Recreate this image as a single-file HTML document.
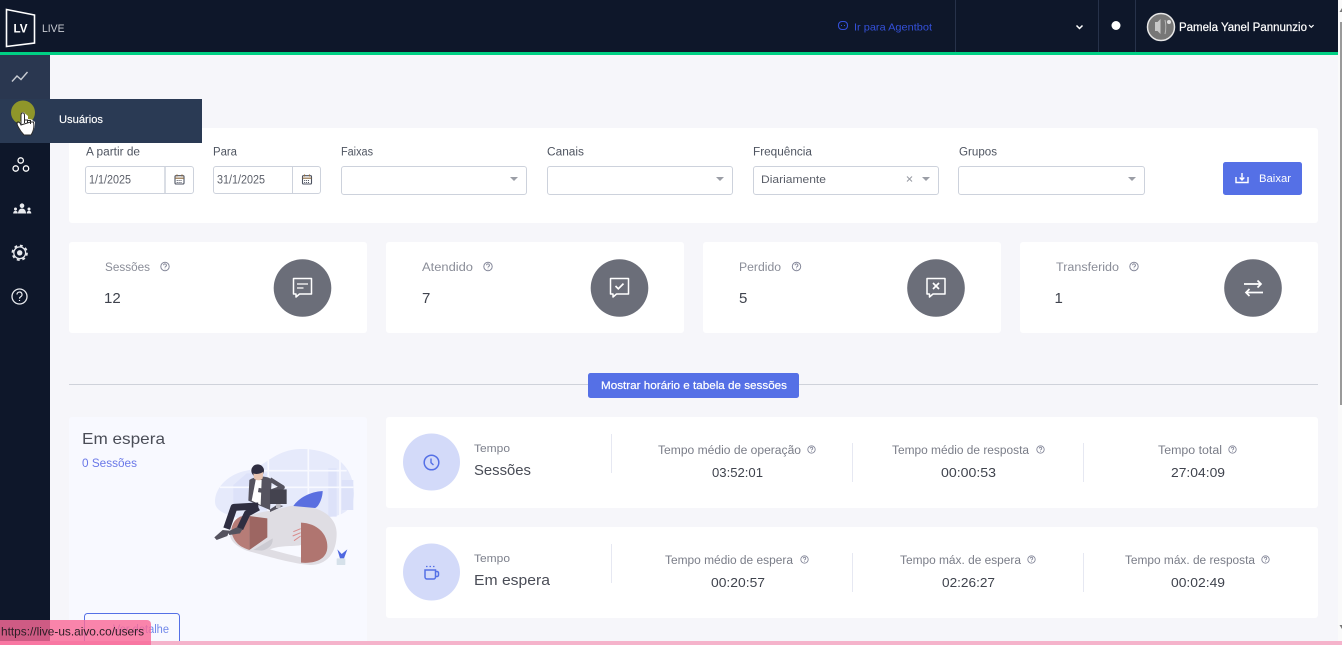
<!DOCTYPE html>
<html lang="pt"><head><meta charset="utf-8"><title>LIVE</title>
<style>
html,body{margin:0;padding:0;width:1342px;height:645px;overflow:hidden;background:#f6f6fa}
svg{display:block}
text{font-family:"Liberation Sans",sans-serif}
.l{font-size:11.5px;fill:#4f5561}
.s{font-size:11.5px;fill:#8a8d98}
.v{font-size:13px;fill:#3f434d}
.n{font-size:15px;fill:#3f434d}
.t{font-size:11px;fill:#7d808c}
.h{font-size:14.5px;fill:#4a4d57}
.m{font-size:11.5px;fill:#7a7d88}
.i{font-size:11.5px;fill:#5a5e68}
</style></head><body>
<svg width="1342" height="645" viewBox="0 0 1342 645" xmlns="http://www.w3.org/2000/svg">
<defs>
<g id="q" fill="none" stroke="#85889a" stroke-width="1"><circle cx="0" cy="0" r="4.2"/><path d="M-1.4-1.2a1.4 1.4 0 1 1 2.1 1.2c-.5.3-.7.6-.7 1.1M0 2.2v.6"/></g>
<g id="qs" fill="none" stroke="#85889a" stroke-width=".9"><circle cx="0" cy="0" r="3.7"/><path d="M-1.2-1a1.2 1.2 0 1 1 1.8 1c-.4.3-.6.5-.6.9M0 1.8v.6"/></g>
<path id="bub" d="M-9-8H9V7.500H-3L-6.500 10.500V7.500H-9Z" fill="none" stroke="#fff" stroke-width="1.500" stroke-linejoin="round"/>
<g id="cal" fill="none" stroke="#4c5260" stroke-width="1.100"><rect x="-4.500" y="-3.800" width="9" height="8.300" rx="1"/><path d="M-4.500-1.300H4.500M-2.500-5V-3M2.500-5V-3" stroke="#8c6a3f"/><path d="M-2.800 1H2.800M-2.800 3H2.800" stroke-dasharray="1 .9"/></g>
</defs>

<rect width="1342" height="645" fill="#f6f6fa"/>

<!-- top bar -->
<rect width="1342" height="52" fill="#0e172a"/>
<rect y="52" width="1342" height="3" fill="#00d084"/>
<path d="M6.500 9.500L34.500 15V43L6.500 46.500Z" fill="none" stroke="#fff" stroke-width="1.600"/>
<text x="13.500" y="32.500" font-size="12" font-weight="700" fill="#fff" textLength="14" lengthAdjust="spacingAndGlyphs">LV</text>
<text x="42" y="32" font-size="11" fill="#c9ccd3" textLength="22.500" lengthAdjust="spacingAndGlyphs">LIVE</text>
<rect x="838.500" y="21.500" width="9" height="8" rx="3.500" fill="none" stroke="#3450d8" stroke-width="1.100"/>
<path d="M841 25.500h1M844 25.500h1" stroke="#3450d8"/>
<text x="854" y="30.500" font-size="10.500" fill="#3450d8" textLength="78" lengthAdjust="spacingAndGlyphs">Ir para Agentbot</text>
<path d="M955.500 0V52M1098.500 0V52M1135.500 0V52" stroke="#27324a"/>
<path d="M1076.500 25.500L1079.500 28.500L1082.500 25.500" fill="none" stroke="#fff" stroke-width="1.500"/>
<circle cx="1116" cy="25.500" r="4.500" fill="#fff"/>
<circle cx="1161" cy="27" r="13.500" fill="#777" stroke="#e6e6e6" stroke-width="1.500"/>
<path d="M1155 22h2.500l3-3v15l-3-3H1155Z" fill="#c8c8c8"/><path d="M1165 20c1 4 1 10 0 14" stroke="#bbb" fill="none"/><circle cx="1169" cy="22" r="2" fill="#ddd"/>
<text x="1179" y="31" font-size="11.500" fill="#fff" stroke="#fff" stroke-width=".2" textLength="128" lengthAdjust="spacingAndGlyphs">Pamela Yanel Pannunzio</text>
<path d="M1309 25l2.300 2.300 2.300-2.300" fill="none" stroke="#fff" stroke-width="1.200"/>

<!-- scrollbar -->
<rect x="1338" y="0" width="4" height="641" fill="#fafafa"/>
<rect x="1340" y="22" width="2" height="383" fill="#9a9a9a"/>
<path d="M1342 8L1339.500 12H1342Z" fill="#777"/>
<path d="M1342 629L1339.500 625H1342Z" fill="#777"/>

<!-- sidebar -->
<rect y="55" width="50" height="590" fill="#0e172a"/>
<rect y="55" width="50" height="44" fill="#2a3750"/>
<path d="M12 81.500L17 76L21 79.500L27.500 72" fill="none" stroke="#c8ccd3" stroke-width="1.400"/>
<g fill="none" stroke="#fff" stroke-width="1.300"><circle cx="20.700" cy="160.500" r="2.700"/><circle cx="15.700" cy="168.500" r="2.700"/><circle cx="26" cy="168.500" r="2.700"/></g>
<g fill="#e8eaee"><circle cx="22" cy="205.700" r="2.300"/><path d="M18 213.500c0-3 1.700-5 4-5s4 2 4 5Z"/><circle cx="15.500" cy="209" r="1.500"/><circle cx="29" cy="209" r="1.500"/><path d="M13.200 213.500c0-1.700.9-2.800 2.300-2.800s2.300 1.100 2.300 2.800ZM26.700 213.500c0-1.700.9-2.800 2.300-2.800s2.300 1.100 2.300 2.800Z"/></g>
<circle cx="19.700" cy="252.800" r="5.900" fill="none" stroke="#e8eaee" stroke-width="1.300"/>
<circle cx="19.700" cy="252.800" r="7.300" fill="none" stroke="#e8eaee" stroke-width="1.700" stroke-dasharray="2.900 2.830"/>
<circle cx="19.700" cy="252.800" r="2.700" fill="#e8eaee"/>
<circle cx="19.500" cy="296.500" r="7.500" fill="none" stroke="#e8eaee" stroke-width="1.300"/>
<path d="M17 294.500a2.500 2.500 0 1 1 3.700 2.200c-.8.500-1.200 1-1.200 1.900M19.500 300v1" fill="none" stroke="#e8eaee" stroke-width="1.200"/>

<!-- filter card -->
<rect x="69" y="128" width="1249" height="95" rx="3" fill="#fff"/>
<text class="l" x="86" y="155.500" textLength="54" lengthAdjust="spacingAndGlyphs">A partir de</text>
<text class="l" x="213" y="155.500" textLength="24" lengthAdjust="spacingAndGlyphs">Para</text>
<text class="l" x="341" y="155.500" textLength="32" lengthAdjust="spacingAndGlyphs">Faixas</text>
<text class="l" x="547" y="155.500" textLength="37" lengthAdjust="spacingAndGlyphs">Canais</text>
<text class="l" x="753" y="155.500" textLength="59" lengthAdjust="spacingAndGlyphs">Frequência</text>
<text class="l" x="959" y="155.500" textLength="38" lengthAdjust="spacingAndGlyphs">Grupos</text>
<g fill="#fff" stroke="#cdd2dc">
<rect x="85.500" y="166.500" width="108" height="27" rx="2.500"/>
<rect x="213.500" y="166.500" width="107" height="27" rx="2.500"/>
<rect x="341.500" y="166.500" width="185" height="28" rx="2.500"/>
<rect x="547.500" y="166.500" width="185" height="28" rx="2.500"/>
<rect x="753.500" y="166.500" width="185" height="28" rx="2.500"/>
<rect x="958.500" y="166.500" width="186" height="28" rx="2.500"/>
</g>
<path d="M165 166.500V193.500" stroke="#cdd2dc" stroke-width="1.500"/><path d="M292.500 166.500V193.500" stroke="#cdd2dc"/>
<text class="i" x="89" y="183.500" textLength="42" lengthAdjust="spacingAndGlyphs">1/1/2025</text>
<text class="i" x="217" y="183.500" textLength="48" lengthAdjust="spacingAndGlyphs">31/1/2025</text>
<use href="#cal" x="179.500" y="179.500"/><use href="#cal" x="307" y="179.500"/>
<g fill="#9b9ea6">
<path d="M510 177h8l-4 4Z"/><path d="M716 177h8l-4 4Z"/><path d="M922 177h8l-4 4Z"/><path d="M1128 177h8l-4 4Z"/>
</g>
<text x="761" y="183" font-size="11" fill="#5a5e68" textLength="65" lengthAdjust="spacingAndGlyphs">Diariamente</text>
<path d="M907 176.500l5 5M912 176.500l-5 5" stroke="#9b9ea6" stroke-width="1.100"/>
<rect x="1223" y="162" width="79" height="33" rx="2.500" fill="#5570e6"/>
<path d="M1236 177v5.500h12V177" fill="none" stroke="#fff" stroke-width="1.400"/><path d="M1242 173v6.500M1239.700 177.500l2.300 2.500 2.300-2.500" fill="none" stroke="#fff" stroke-width="1.400"/>
<text x="1259" y="182" font-size="11" fill="#fff" textLength="32" lengthAdjust="spacingAndGlyphs">Baixar</text>

<!-- stats -->
<g fill="#fff"><rect x="69" y="242" width="298" height="91" rx="3"/><rect x="386" y="242" width="298" height="91" rx="3"/><rect x="703" y="242" width="298" height="91" rx="3"/><rect x="1020" y="242" width="298" height="91" rx="3"/></g>
<text class="s" x="105" y="271" textLength="45" lengthAdjust="spacingAndGlyphs">Sessões</text><use href="#q" x="165" y="266.500"/>
<text class="s" x="422" y="271" textLength="51" lengthAdjust="spacingAndGlyphs">Atendido</text><use href="#q" x="488" y="266.500"/>
<text class="s" x="739" y="271" textLength="42" lengthAdjust="spacingAndGlyphs">Perdido</text><use href="#q" x="796.500" y="266.500"/>
<text class="s" x="1056" y="271" textLength="63" lengthAdjust="spacingAndGlyphs">Transferido</text><use href="#q" x="1134" y="266.500"/>
<text class="n" x="104" y="303">12</text>
<text class="n" x="422" y="303">7</text>
<text class="n" x="739" y="303">5</text>
<text class="n" x="1054.500" y="303">1</text>
<g fill="#6b6e79"><circle cx="302.500" cy="288" r="28.800"/><circle cx="619.500" cy="288" r="28.800"/><circle cx="936" cy="288" r="28.800"/><circle cx="1253" cy="288" r="28.800"/></g>
<use href="#bub" x="302.500" y="286.500"/><path d="M297 284h11M297 288h6.500" stroke="#fff" stroke-width="1.300"/>
<use href="#bub" x="619.500" y="286.500"/><path d="M615.500 286l2.800 2.800 5.200-5.200" fill="none" stroke="#fff" stroke-width="1.700"/>
<use href="#bub" x="936" y="286.500"/><path d="M933 283l6 6M939 283l-6 6" stroke="#fff" stroke-width="1.700"/>
<path d="M1244 284h17M1257.500 280.500l3.500 3.500-3.500 3.500M1263 292.500h-17M1249.500 289l-3.500 3.500 3.500 3.500" fill="none" stroke="#fff" stroke-width="1.700"/>

<!-- divider -->
<path d="M69 384.500H1318" stroke="#cfd2da"/>
<rect x="588" y="373" width="211" height="25" rx="2.500" fill="#5570e6"/>
<text x="601" y="389" font-size="11" fill="#fff" stroke="#fff" stroke-width=".2" textLength="186" lengthAdjust="spacingAndGlyphs">Mostrar horário e tabela de sessões</text>

<!-- espera card -->
<rect x="69" y="417" width="298" height="228" rx="3" fill="#f8f9ff"/>
<text x="82" y="444" font-size="16" fill="#4a4d57" textLength="83" lengthAdjust="spacingAndGlyphs">Em espera</text>
<text x="82" y="467" font-size="11.500" fill="#6a78e8" textLength="55" lengthAdjust="spacingAndGlyphs">0 Sessões</text>
<g transform="translate(190 430) scale(.33333)">
<path d="M75 215C75 170 120 130 170 122C230 110 250 60 330 57C420 55 492 100 492 190C492 250 440 262 400 262L240 302C200 300 170 270 130 260C100 250 75 240 75 215Z" fill="#e6eafb"/>
<path d="M130 165L170 130H230V240H130ZM415 115H440V260H415ZM455 150H490V240H455Z" fill="#dde2f9"/>
<path d="M355 57V260M450 90V260M90 172H490M180 122H470M235 90V250" stroke="#f8f9ff" stroke-width="5" fill="none"/>
<path d="M120 300C140 250 220 250 300 228C390 222 440 260 440 310C440 370 410 405 360 405C300 400 220 375 170 362C130 345 115 325 120 300Z" fill="#dfdde3"/>
<path d="M190 360L248 325C250 345 235 358 215 362Z" fill="#cccbd2"/>
<path d="M240 358C270 345 320 350 333 345V382C290 372 265 365 240 358Z" fill="#f8f9ff"/>
<path d="M333 278C380 280 412 310 412 350C412 385 380 402 333 398Z" fill="#b07570"/>
<path d="M178 258C140 250 120 285 125 310C135 340 150 350 178 360Z" fill="#b67c77"/>
<path d="M178 258L232 265V322L178 360Z" fill="#9d6662"/>
<path d="M332 296L310 305M332 308L308 318M332 318L312 332" stroke="#d98a8a" stroke-width="3"/>
<path d="M310 228C325 205 360 185 398 183C398 205 385 232 375 234Z" fill="#5a6fe0"/>
<path d="M178 150C195 138 235 135 245 150L240 240L175 212Z" fill="#55535f"/>
<path d="M197 150L215 150L212 225L185 212Z" fill="#fff"/>
<path d="M240 148L278 172L240 186L205 180" fill="none" stroke="#55535f" stroke-width="13" stroke-linejoin="round"/>
<path d="M240 178H290V222H240Z" fill="#44434f"/><path d="M240 246L280 228L262 224L240 238Z" fill="#55535f"/><path d="M258 222H272V234H258Z" fill="#bdbcc4"/>
<path d="M205 228L132 232L110 296" fill="none" stroke="#2f2e41" stroke-width="21" stroke-linejoin="round"/>
<path d="M205 232L172 250L150 296" fill="none" stroke="#2f2e41" stroke-width="20" stroke-linejoin="round"/>
<path d="M98 300L118 302L112 318L80 330L73 322ZM140 292L158 297L150 310L118 315L113 305Z" fill="#55535f"/>
<circle cx="203" cy="122" r="19" fill="#2f2e41"/><path d="M190 130C200 135 215 130 220 125L218 145C210 155 195 150 192 145Z" fill="#e8c4b0"/>
<path d="M442 358L455 372L472 358L462 385H450Z" fill="#4f68e0"/>
<rect x="440" y="385" width="26" height="20" rx="2" fill="#d6e1ea"/>
</g>
<rect x="84.500" y="613.500" width="95" height="36" rx="3" fill="none" stroke="#5570e6"/>
<text x="113" y="633" font-size="11.500" fill="#7088ea" textLength="56" lengthAdjust="spacingAndGlyphs">Ver detalhe</text>

<!-- time cards -->
<g fill="#fff"><rect x="386" y="417" width="932" height="91" rx="3"/><rect x="386" y="527" width="932" height="91" rx="3"/></g>
<g fill="#d3daf9"><circle cx="431.500" cy="462" r="28.500"/><circle cx="431.500" cy="572" r="28.500"/></g>
<circle cx="431.500" cy="462.500" r="7.300" fill="none" stroke="#5570e6" stroke-width="1.500"/><path d="M431 458.500v4.200l2.500 2.300" fill="none" stroke="#5570e6" stroke-width="1.400"/>
<path d="M425 570h10.500v7a2 2 0 0 1-2 2H427a2 2 0 0 1-2-2ZM435.500 571.500h1.500a1.500 1.500 0 0 1 1.500 1.500v2a1.500 1.500 0 0 1-1.500 1.500h-1.500" fill="none" stroke="#5570e6" stroke-width="1.500"/>
<path d="M426 566.500h9" stroke="#5570e6" stroke-width="1.300" stroke-dasharray="1.500 2"/>
<text class="t" x="474" y="452" textLength="36" lengthAdjust="spacingAndGlyphs">Tempo</text>
<text class="h" x="474" y="475" textLength="57" lengthAdjust="spacingAndGlyphs">Sessões</text>
<text class="t" x="474" y="562" textLength="36" lengthAdjust="spacingAndGlyphs">Tempo</text>
<text class="h" x="474" y="585" textLength="76" lengthAdjust="spacingAndGlyphs">Em espera</text>
<path d="M611.500 434V473M611.500 544V583M852.500 443V482M852.500 553V592M1083.500 443V482M1083.500 553V592" stroke="#e6e8f2"/>

<text class="m" x="658" y="454" textLength="143" lengthAdjust="spacingAndGlyphs">Tempo médio de operação</text><use href="#qs" x="811.500" y="449.500"/>
<text class="m" x="892" y="454" textLength="137" lengthAdjust="spacingAndGlyphs">Tempo médio de resposta</text><use href="#qs" x="1040.500" y="449.500"/>
<text class="m" x="1158" y="454" textLength="64" lengthAdjust="spacingAndGlyphs">Tempo total</text><use href="#qs" x="1232.500" y="449.500"/>
<text class="v" x="712" y="477" textLength="51" lengthAdjust="spacingAndGlyphs">03:52:01</text>
<text class="v" x="941" y="477" textLength="55" lengthAdjust="spacingAndGlyphs">00:00:53</text>
<text class="v" x="1171" y="477" textLength="54" lengthAdjust="spacingAndGlyphs">27:04:09</text>

<text class="m" x="665" y="564" textLength="128" lengthAdjust="spacingAndGlyphs">Tempo médio de espera</text><use href="#qs" x="804.500" y="559.500"/>
<text class="m" x="900" y="564" textLength="121" lengthAdjust="spacingAndGlyphs">Tempo máx. de espera</text><use href="#qs" x="1031.500" y="559.500"/>
<text class="m" x="1125" y="564" textLength="130" lengthAdjust="spacingAndGlyphs">Tempo máx. de resposta</text><use href="#qs" x="1265.500" y="559.500"/>
<text class="v" x="711" y="587" textLength="54" lengthAdjust="spacingAndGlyphs">00:20:57</text>
<text class="v" x="942" y="587" textLength="53" lengthAdjust="spacingAndGlyphs">02:26:27</text>
<text class="v" x="1171" y="587" textLength="54" lengthAdjust="spacingAndGlyphs">00:02:49</text>

<!-- tooltip -->
<rect y="99" width="202" height="44" fill="#2a3a54"/>
<text x="59" y="123" font-size="11" fill="#fff" stroke="#fff" stroke-width=".15" textLength="44" lengthAdjust="spacingAndGlyphs">Usuários</text>
<circle cx="23" cy="112.500" r="12" fill="#8f962a"/>
<path d="M21 115V121L17.500 123.500C18 128 21 133 24 135H31C33 132 35 128 35 122L31.500 119.500L28 119V116L25 113.500C23.500 111 21 112 21 115Z" fill="#fff"/>
<path d="M21 125V115.500C21 112 24.500 112 24.500 115.500V123M24.500 120H27.500V123M27.500 120.500H30.500V124M30.500 122H33.500C34.500 127 33 132 31 135H24C21 132 18 127 16.500 123C18 121 20 122 21 125Z" fill="none" stroke="#2b2b2b" stroke-width="1"/>

<!-- browser status -->
<rect y="641" width="1342" height="4" fill="#f5b3cb"/>
<path d="M0 620H147a4 4 0 0 1 4 4V645H0Z" fill="#f96a98" fill-opacity=".82"/>
<text x="1" y="635.500" font-size="12" fill="#2a1d24" textLength="143" lengthAdjust="spacingAndGlyphs">https://live-us.aivo.co/users</text>
</svg>
</body></html>
